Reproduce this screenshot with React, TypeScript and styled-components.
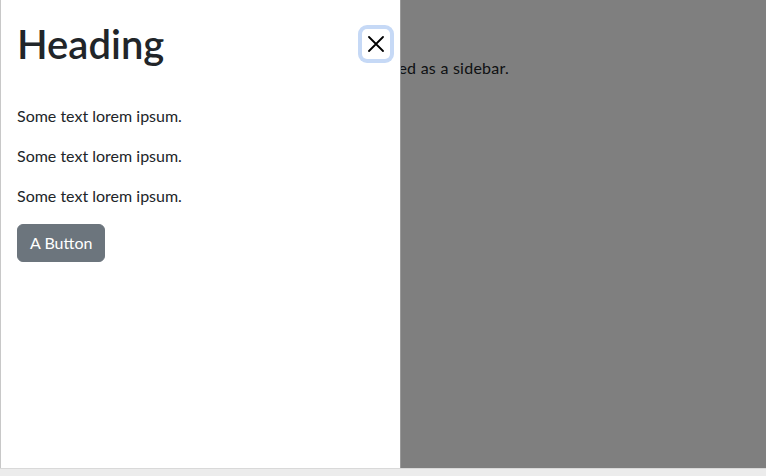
import styled, { createGlobalStyle } from "styled-components";

const GlobalStyle = createGlobalStyle`
  html, body {
    margin: 0;
    padding: 0;
    height: 100%;
  }
  body {
    font-family: Lato, "Open Sans", "Liberation Sans", sans-serif;
    color: #212529;
    background: #ffffff;
  }
  #root {
    height: 100%;
  }
`;

const colors = {
  text: "#212529",
  secondary: "#6c757d",
  focusRing: "#c6d9f6",
  frame: "#c8c8c8",
  strip: "#ececec",
};

const Window = styled("div")`
  display: flex;
  flex-direction: column;
  height: 100vh;
`;

const Viewport = styled("div")`
  flex: 1;
  position: relative;
  overflow: hidden;
  border-left: 1px solid ${colors.frame};
`;

const BottomStrip = styled("div")`
  height: 7px;
  background: ${colors.strip};
  border-top: 1px solid #d9d9d9;
`;

const PageContent = styled("main")`
  padding: 56px 0 0 16px;
  width: 492px;
`;

const Lead = styled("p")`
  margin: 0;
  font-size: 16px;
  line-height: 24px;
  letter-spacing: 0.25px;
  text-align: right;
  white-space: nowrap;
`;

const Backdrop = styled("div")`
  position: absolute;
  inset: 0;
  background: rgba(0, 0, 0, 0.5);
`;

const Offcanvas = styled("aside")`
  position: absolute;
  top: 0;
  left: 0;
  bottom: 0;
  width: 400px;
  box-sizing: border-box;
  background: #ffffff;
  border-right: 1px solid rgba(0, 0, 0, 0.4);
  display: flex;
  flex-direction: column;
`;

const Header = styled("header")`
  display: flex;
  align-items: center;
  justify-content: space-between;
  padding: 16px;
`;

const Title = styled("h1")`
  margin: 0;
  font-size: 40px;
  font-weight: 600;
  line-height: 56px;
`;

const CloseButton = styled("button")`
  display: flex;
  align-items: center;
  justify-content: center;
  width: 28px;
  height: 30px;
  margin-right: -6px;
  padding: 0;
  background: #ffffff;
  border: none;
  border-radius: 5px;
  box-shadow: 0 0 0 4px ${colors.focusRing};
  cursor: pointer;
`;

const Body = styled("div")`
  padding: 16px;
`;

const Text = styled("p")`
  margin: 0 0 16px;
  font-size: 16px;
  line-height: 24px;
`;

const Button = styled("button")`
  font-family: inherit;
  font-size: 16px;
  line-height: 24px;
  padding: 6px 12px;
  color: #ffffff;
  background: ${colors.secondary};
  border: 1px solid ${colors.secondary};
  border-radius: 6px;
  cursor: pointer;
`;

const CloseIcon = () => (
  <svg width="16" height="16" viewBox="0 0 16 16" aria-hidden="true">
    <path d="M1 1 L15 15 M15 1 L1 15" stroke="#000" strokeWidth="1.8" strokeLinecap="round" />
  </svg>
);

export default function App() {
  return (
    <>
      <GlobalStyle />
      <Window>
        <Viewport>
          <PageContent>
            <Lead>be used as a sidebar.</Lead>
          </PageContent>
          <Backdrop />
          <Offcanvas>
            <Header>
              <Title>Heading</Title>
              <CloseButton aria-label="Close">
                <CloseIcon />
              </CloseButton>
            </Header>
            <Body>
              <Text>Some text lorem ipsum.</Text>
              <Text>Some text lorem ipsum.</Text>
              <Text>Some text lorem ipsum.</Text>
              <Button>A Button</Button>
            </Body>
          </Offcanvas>
        </Viewport>
        <BottomStrip />
      </Window>
    </>
  );
}
